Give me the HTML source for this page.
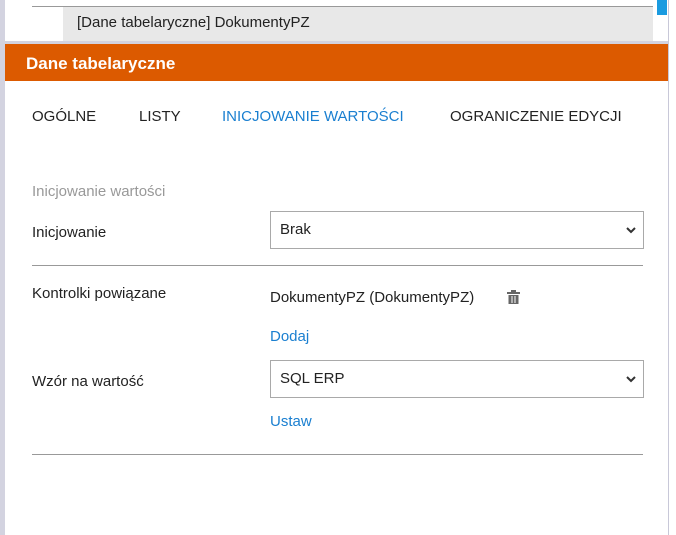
<!DOCTYPE html><html><head><style>
body{margin:0;width:676px;height:535px;background:#fff;position:relative;overflow:hidden;font-family:"Liberation Sans",sans-serif;font-size:15px;color:#222}
.a{position:absolute}
.sel{position:absolute;left:270px;width:374px;height:38px;border:1px solid #a9a9a9;box-sizing:border-box}
.sel span{position:absolute;left:9px;top:9px;font-size:15px}
.sel svg{position:absolute;right:7px;top:15px}
.lnk{color:#1a7fd0}
</style></head><body>
<div class="a" style="left:0;top:0;width:5px;height:535px;background:#d3d3e0"></div>
<div class="a" style="left:668px;top:0;width:1px;height:535px;background:#c8c8d8"></div>
<div class="a" style="left:32px;top:6px;width:621px;height:1px;background:#999"></div>
<div class="a" style="left:63px;top:7px;width:590px;height:34px;background:#e8e8e8"></div>
<div class="a" style="left:77px;top:14px;font-size:15px">[Dane tabelaryczne] DokumentyPZ</div>
<div class="a" style="left:657px;top:0;width:10px;height:15px;background:#1a9be0"></div>
<div class="a" style="left:5px;top:41px;width:663px;height:3px;background:#d3d3e0"></div>
<div class="a" style="left:5px;top:44px;width:663px;height:37px;background:#dc5a00"></div>
<div class="a" style="left:26px;top:54px;color:#fff;font-size:17px;font-weight:bold">Dane tabelaryczne</div>
<div class="a" style="left:32px;top:108px">OGÓLNE</div>
<div class="a" style="left:139px;top:108px">LISTY</div>
<div class="a lnk" style="left:222px;top:108px">INICJOWANIE WARTOŚCI</div>
<div class="a" style="left:450px;top:108px">OGRANICZENIE EDYCJI</div>
<div class="a" style="left:32px;top:183px;color:#999">Inicjowanie wartości</div>
<div class="a" style="left:32px;top:224px">Inicjowanie</div>
<div class="sel" style="top:211px"><span>Brak</span><svg width="10" height="7"><path d="M1 1L5 5L9 1" stroke="#333" stroke-width="2" fill="none"/></svg></div>
<div class="a" style="left:32px;top:265px;width:611px;height:1px;background:#999"></div>
<div class="a" style="left:32px;top:285px">Kontrolki powiązane</div>
<div class="a" style="left:270px;top:289px">DokumentyPZ (DokumentyPZ)</div>
<svg class="a" style="left:507px;top:290px" width="13" height="14"><rect x="4" y="0" width="5" height="2" fill="#666"/><rect x="0" y="2" width="13" height="2" fill="#666"/><path d="M1.5 5h10v9h-10z" fill="#666"/><path d="M5 6v7M8 6v7" stroke="#fff" stroke-width="1"/></svg>
<div class="a lnk" style="left:270px;top:328px">Dodaj</div>
<div class="a" style="left:32px;top:373px">Wzór na wartość</div>
<div class="sel" style="top:360px"><span>SQL ERP</span><svg width="10" height="7"><path d="M1 1L5 5L9 1" stroke="#333" stroke-width="2" fill="none"/></svg></div>
<div class="a lnk" style="left:270px;top:413px">Ustaw</div>
<div class="a" style="left:32px;top:454px;width:611px;height:1px;background:#999"></div>
</body></html>
